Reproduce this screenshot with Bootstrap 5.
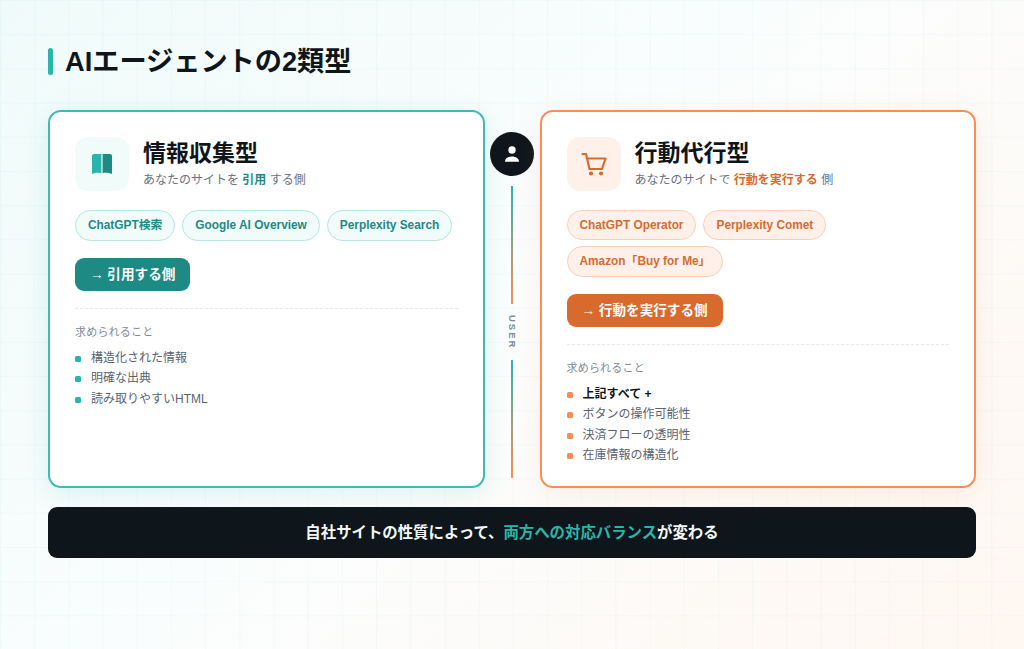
<!DOCTYPE html>
<html lang="ja">
<head>
  <meta charset="UTF-8" />
  <meta name="viewport" content="width=device-width, initial-scale=1.0" />
  <title>AIエージェントの2類型</title>
  <link href="https://cdn.jsdelivr.net/npm/bootstrap@5.3.3/dist/css/bootstrap.min.css" rel="stylesheet" />
  <style>
    html, body { height: 100%; }
    body {
      font-family: "Liberation Sans", "Noto Sans CJK JP", sans-serif;
      color: #0f172a;
      overflow: hidden;
      background-color: #fff;
      background-image:
        linear-gradient(rgba(42, 181, 172, 0.04) 1px, transparent 1px),
        linear-gradient(90deg, rgba(42, 181, 172, 0.04) 1px, transparent 1px),
        linear-gradient(135deg, #effbfa 0%, #fbfdfd 50%, #fff7f1 100%);
      background-size: 34.2px 34.2px, 34.2px 34.2px, 100% 100%;
    }
    .slide { width: 1024px; height: 649px; padding: 45px 48px 0; }
    .title-row { height: 32px; margin-bottom: 33px; }
    .title-bar { width: 5px; height: 27px; background: #2ab5ac; border-radius: 3px; }
    .title-text { font-size: 27.2px; font-weight: 700; color: #0f161b; line-height: 30px; padding-top: 2px; margin: 0 0 0 12px; }
    .cols { height: 378px; }
    .type-card { width: 436.5px; height: 378px; background: #fff; border: 2px solid; border-radius: 13px; padding: 25px 25px; }
    .type-a { border-color: #3dbab2; box-shadow: 0 6px 26px rgba(42, 181, 172, 0.14); }
    .type-b { border-color: #f98d55; box-shadow: 0 6px 26px rgba(249, 141, 85, 0.12); }
    .icon-tile { width: 54px; height: 54px; border-radius: 13px; flex: none; }
    .type-a .icon-tile, .type-a .chip { background: #f0fbfa; }
    .type-b .icon-tile, .type-b .chip { background: #fff1e9; }
    .card-head { margin-left: 14px; padding-top: 1px; }
    .card-name { font-size: 23px; font-weight: 700; color: #0f161b; line-height: 30px; margin: 0; }
    .card-sub { font-size: 12px; color: #68727f; line-height: 17px; margin: 4px 0 0; }
    .type-a .hl { color: #1d8a84; font-weight: 700; }
    .type-b .hl { color: #d96a2e; font-weight: 700; }
    .chips { margin-top: 19px; gap: 6px 7px; }
    .chip { font-size: 11.85px; font-weight: 700; border: 1px solid; border-radius: 16px; height: 31px; padding: 0 12px; line-height: 29px; white-space: nowrap; }
    .chip-short { height: 30px; line-height: 28px; }
    .type-a .chip { color: #1d8a84; border-color: #b5e6e2; }
    .type-b .chip { color: #d96a2e; border-color: #fbcfb5; }
    .cta { font-size: 13.6px; font-weight: 700; color: #fff; height: 33px; line-height: 33px; padding: 0 15px; border-radius: 9px; margin-top: 17px; }
    .type-a .cta { background: #1d8a84; }
    .type-b .cta { background: #d96a2e; }
    .rule { border-top: 1px dashed #e6e9ec; margin: 17px 0 15px; }
    .req-label { font-size: 11px; color: #808a96; line-height: 16px; margin-bottom: 8px; letter-spacing: 0.2px; }
    .req-list { list-style: none; margin: 0; padding: 0; }
    .req-list li { font-size: 12px; color: #59636f; line-height: 20.4px; padding-left: 16px; position: relative; }
    .req-list li::before { content: ""; position: absolute; left: 0; top: 8px; width: 6px; height: 6px; border-radius: 1.5px; }
    .type-a .req-list li::before { background: #2ab5ac; }
    .type-b .req-list li::before { background: #f98d55; }
    .req-list li.lead-item { color: #0f161b; font-weight: 700; }
    .axis { width: 55px; flex: none; padding-top: 22px; height: 378px; }
    .user-dot { width: 44px; height: 44px; background: #0f161b; border-radius: 50%; flex: none; }
    .axis-line { width: 2px; background: linear-gradient(180deg, #2ab5ac, #f98d55); }
    .line-top { height: 118px; margin-top: 10px; }
    .line-bot { height: 118px; }
    .axis-label { writing-mode: vertical-rl; font-size: 9.5px; font-weight: 700; letter-spacing: 2px; color: #808a96; height: 56px; line-height: 10px; text-align: center; }
    .footer-bar { height: 51px; margin-top: 19px; padding-top: 1px; background: #0f161b; border-radius: 9px; color: #f4f6f7; font-size: 15.4px; font-weight: 700; }
    .footer-bar span { color: #2ab5ac; }
  </style>
</head>
<body>
<div class="slide">
  <!-- Title -->
  <div class="title-row d-flex align-items-center">
    <div class="title-bar"></div>
    <h1 class="title-text">AIエージェントの2類型</h1>
  </div>

  <div class="cols d-flex">
    <!-- Left card -->
    <div class="type-card type-a">
      <div class="d-flex">
        <div class="icon-tile d-flex align-items-center justify-content-center">
          <svg width="22" height="22" viewBox="0 0 22 22">
            <path d="M1 3C1 1.9 1.9 1 3 1H10.4V20.2C8 19.5 4 19.6 1 21Z" fill="#2ab5ac"/>
            <path d="M21 3C21 1.9 20.1 1 19 1H11.6V20.2C14 19.5 18 19.6 21 21Z" fill="#1d8a84"/>
          </svg>
        </div>
        <div class="card-head">
          <h2 class="card-name">情報収集型</h2>
          <p class="card-sub">あなたのサイトを <span class="hl">引用</span> する側</p>
        </div>
      </div>
      <div class="chips d-flex flex-wrap">
        <div class="chip">ChatGPT検索</div>
        <div class="chip">Google AI Overview</div>
        <div class="chip">Perplexity Search</div>
      </div>
      <div class="d-flex"><div class="cta">→ 引用する側</div></div>
      <div class="rule"></div>
      <div class="req-label">求められること</div>
      <ul class="req-list">
        <li>構造化された情報</li>
        <li>明確な出典</li>
        <li>読み取りやすいHTML</li>
      </ul>
    </div>

    <!-- Centre axis -->
    <div class="axis d-flex flex-column align-items-center">
      <div class="user-dot d-flex align-items-center justify-content-center">
        <svg width="16" height="16" viewBox="0 0 16 16" fill="#fff">
          <circle cx="8" cy="4" r="3.7"/>
          <path d="M1 15.7C1 12.5 4 10.4 8 10.4S15 12.5 15 15.7Z"/>
        </svg>
      </div>
      <div class="axis-line line-top"></div>
      <div class="axis-label">USER</div>
      <div class="axis-line line-bot"></div>
    </div>

    <!-- Right card -->
    <div class="type-card type-b">
      <div class="d-flex">
        <div class="icon-tile d-flex align-items-center justify-content-center">
          <svg width="26" height="24" viewBox="0 0 26 24" fill="none" stroke="#d96a2e" stroke-width="2.2" stroke-linecap="round" stroke-linejoin="round">
            <path d="M1.5 2H5L8.5 17H21L24.5 6.5H5.8"/>
            <circle cx="10" cy="21.5" r="1" fill="#d96a2e"/>
            <circle cx="20" cy="21.5" r="1" fill="#d96a2e"/>
          </svg>
        </div>
        <div class="card-head">
          <h2 class="card-name">行動代行型</h2>
          <p class="card-sub">あなたのサイトで <span class="hl">行動を実行する</span> 側</p>
        </div>
      </div>
      <div class="chips d-flex flex-wrap">
        <div class="chip chip-short">ChatGPT Operator</div>
        <div class="chip chip-short">Perplexity Comet</div>
        <div class="chip">Amazon「Buy for Me」</div>
      </div>
      <div class="d-flex"><div class="cta">→ 行動を実行する側</div></div>
      <div class="rule"></div>
      <div class="req-label">求められること</div>
      <ul class="req-list">
        <li class="lead-item">上記すべて +</li>
        <li>ボタンの操作可能性</li>
        <li>決済フローの透明性</li>
        <li>在庫情報の構造化</li>
      </ul>
    </div>
  </div>

  <!-- Footer -->
  <div class="footer-bar d-flex align-items-center justify-content-center">自社サイトの性質によって、<span>両方への対応バランス</span>が変わる</div>
</div>
<script src="https://cdn.jsdelivr.net/npm/bootstrap@5.3.3/dist/js/bootstrap.bundle.min.js"></script>
</body>
</html>
